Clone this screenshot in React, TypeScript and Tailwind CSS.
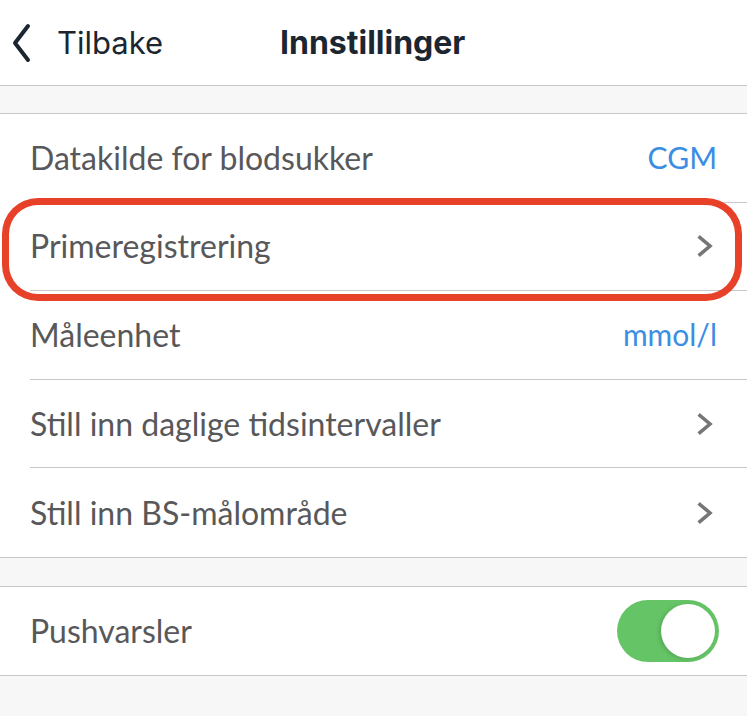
import React from "react";

const Chevron = () => (
  <svg width="22" height="24" viewBox="0 0 22 24" className="shrink-0">
    <path d="M5 3.5 L15 12 L5 20.5" fill="none" stroke="#767676" strokeWidth="3.6" strokeLinecap="square" strokeLinejoin="miter" />
  </svg>
);

const rowFont = { fontFamily: "Lato, 'Open Sans', sans-serif" };

function Row({
  label,
  right,
  last,
  highlight,
}: {
  label: string;
  right: React.ReactNode;
  last?: boolean;
  highlight?: boolean;
}) {
  return (
    <div className="relative pl-[30px]">
      <div
        className={`flex h-[88.6px] items-center justify-between pr-[30px] ${last ? "" : "border-b border-[#c8c8c8]"}`}
      >
        <span className="text-[32px] text-[#58585a]" style={rowFont}>
          {label}
        </span>
        {right}
      </div>
      {highlight && (
        <div className="pointer-events-none absolute left-[2px] right-[5px] top-[-5px] bottom-[-10px] rounded-[36px] ring-[7px] ring-inset ring-[#e8412a]" />
      )}
    </div>
  );
}

export default function App() {
  const blue = "text-[30px] text-[#3b8ee2]";
  return (
    <div className="w-[747px] h-[716px] overflow-hidden bg-[#f7f7f7]">
      <header
        className="relative flex h-[86px] items-center border-b border-[#c8c8c8] bg-white"
        style={{ fontFamily: "Inter, Roboto, sans-serif" }}
      >
        <div className="flex items-center pl-[12px] text-[#1b2631]">
          <svg width="20" height="40" viewBox="0 0 20 40">
            <path d="M16 3 L3 20 L16 37" fill="none" stroke="#1b2631" strokeWidth="4" strokeLinecap="round" strokeLinejoin="round" />
          </svg>
          <span className="ml-[25px] text-[31px] leading-none">Tilbake</span>
        </div>
        <span className="absolute left-[280px] text-[32px] font-bold leading-none text-[#1b2631]">Innstillinger</span>
      </header>
      <div className="h-[27px]" />
      <section className="border-y border-[#c8c8c8] bg-white">
        <Row label="Datakilde for blodsukker" right={<span className={blue} style={rowFont}>CGM</span>} />
        <Row label="Primeregistrering" right={<Chevron />} highlight />
        <Row label="Måleenhet" right={<span className={blue} style={rowFont}>mmol/l</span>} />
        <Row label="Still inn daglige tidsintervaller" right={<Chevron />} />
        <Row label="Still inn BS-målområde" right={<Chevron />} last />
      </section>
      <div className="h-[28px]" />
      <section className="border-y border-[#c8c8c8] bg-white">
        <div className="flex h-[88px] items-center justify-between pl-[30px] pr-[28px]">
          <span className="text-[32px] text-[#58585a]" style={rowFont}>
            Pushvarsler
          </span>
          <div className="flex h-[62px] w-[102px] items-center justify-end rounded-full bg-[#65c466] pr-[4px]">
            <div className="h-[54px] w-[54px] rounded-full bg-white shadow-[-2px_1px_4px_rgba(0,0,0,0.15)]" />
          </div>
        </div>
      </section>
    </div>
  );
}
